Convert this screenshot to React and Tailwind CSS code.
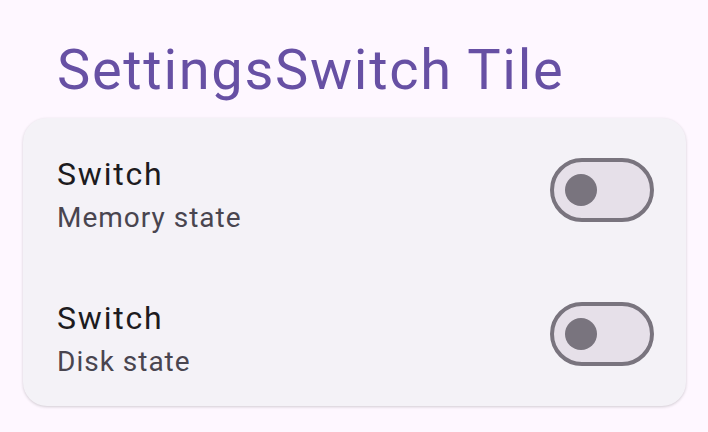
import React, { useState } from 'react';

const font = { fontFamily: 'Roboto, "Noto Sans", sans-serif' };

const SwitchTile = ({ title, subtitle }) => {
  const [on, setOn] = useState(false);

  return (
    <div className="flex h-[144px] items-center justify-between pl-[34px] pr-8">
      <div className="mt-2 flex flex-col">
        <span className="text-[32px] leading-[48px] tracking-[1.8px] text-[#1d1b20]">{title}</span>
        <span className="text-[28px] leading-[40px] tracking-[1px] text-[#49454f]">{subtitle}</span>
      </div>
      <button
        onClick={() => setOn(!on)}
        className="flex h-[64px] w-[104px] items-center rounded-full border-4 border-[#79747e] bg-[#e6e0e9] pl-[11px]"
      >
        <span className="block h-[32px] w-[32px] rounded-full bg-[#79747e]" />
      </button>
    </div>
  );
};

export default function App() {
  return (
    <div className="min-h-screen w-[708px] bg-[#fef7ff]" style={font}>
      {/* Header */}
      <div className="pl-[57px] pt-[34px]">
        <h1 className="text-[56px] leading-[72px] tracking-[1.7px] text-[#6750a4]">SettingsSwitch Tile</h1>
      </div>

      {/* Card */}
      <div className="ml-[23px] mt-3 w-[663px] overflow-hidden rounded-[24px] bg-[#f4f2f7] shadow-[0_1px_3px_rgba(0,0,0,0.18)]">
        <SwitchTile title="Switch" subtitle="Memory state" />
        <SwitchTile title="Switch" subtitle="Disk state" />
      </div>
    </div>
  );
}
